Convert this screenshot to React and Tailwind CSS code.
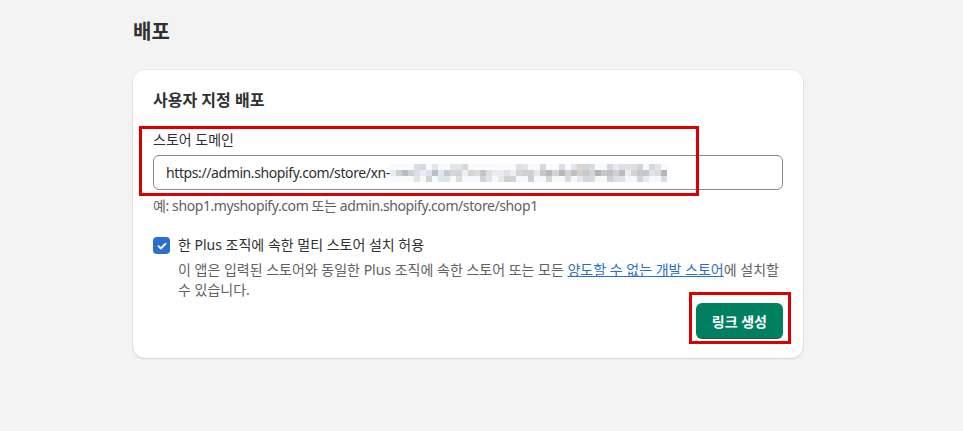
import React from "react";

const FONT = { fontFamily: '"Noto Sans", "Noto Sans CJK KR", sans-serif' };

function Mosaic() {
  const cols = 46;
  const rows = 3;
  const cells = [];
  let seed = 7;
  const rnd = () => {
    seed = (seed * 9301 + 49297) % 233280;
    return seed / 233280;
  };
  for (let r = 0; r < rows; r++) {
    for (let c = 0; c < cols; c++) {
      const v = rnd();
      let base;
      if (r === 0) base = v < 0.55 ? 250 : 232 - Math.floor(rnd() * 25);
      else if (r === 1) base = 238 - Math.floor(v * 60);
      else base = v < 0.4 ? 248 : 236 - Math.floor(rnd() * 30);
      const tint = Math.floor(rnd() * 10) - 5;
      cells.push(
        <div
          key={r + "-" + c}
          style={{
            backgroundColor: `rgb(${Math.min(255, base + tint)},${base},${Math.min(255, Math.max(0, base - tint + 4))})`,
          }}
        />
      );
    }
  }
  return (
    <div
      className="grid h-[18px] w-[277px]"
      style={{ gridTemplateColumns: `repeat(${cols}, 1fr)`, gridTemplateRows: `repeat(${rows}, 1fr)` }}
    >
      {cells}
    </div>
  );
}

export default function App() {
  return (
    <div className="min-h-screen w-full bg-[#f3f3f3]" style={FONT}>
      <div className="ml-[133px] w-[670px] pt-[17px]">
        <h1 className="text-[20px] leading-[30px] font-bold text-[#303030]">배포</h1>
        <div className="relative mt-[23px] rounded-xl bg-white px-5 pt-[20px] pb-[19px] shadow-[0_1px_2px_rgba(0,0,0,0.12),0_0_0_1px_rgba(0,0,0,0.03)]">
          <h2 className="text-[16px] leading-5 font-bold text-[#303030]">사용자 지정 배포</h2>

          <div className="mt-5 text-[14px] leading-5 text-[#303030]">스토어 도메인</div>
          <div className="mt-[5px] flex h-[35px] items-center rounded-md border border-[#8a8a8a] px-3 text-[14px] text-[#303030]">
            <span className="tracking-[-0.4px]">https://admin.shopify.com/store/xn-</span>
            <Mosaic />
          </div>
          <div className="mt-[6px] text-[14px] leading-5 tracking-[-0.4px] text-[#616161]">
            예: shop1.myshopify.com 또는 admin.shopify.com/store/shop1
          </div>

          <div className="mt-[19px] flex gap-2">
            <div className="mt-[2px] flex h-[17px] w-[17px] shrink-0 items-center justify-center rounded-[4px] bg-[#2c6ecb]">
              <svg width="12" height="12" viewBox="0 0 12 12" fill="none">
                <path d="M2.5 6.2l2.3 2.3L9.6 3.6" stroke="white" strokeWidth="1.8" strokeLinecap="round" strokeLinejoin="round" />
              </svg>
            </div>
            <div className="text-[14px] leading-5">
              <p className="text-[#303030]">한 Plus 조직에 속한 멀티 스토어 설치 허용</p>
              <p className="mt-[5px] text-[#616161]">
                이 앱은 입력된 스토어와 동일한 Plus 조직에 속한 스토어 또는 모든{" "}
                <a className="text-[#2c6ecb] underline">양도할 수 없는 개발 스토어</a>에 설치할 수 있습니다.
              </p>
            </div>
          </div>

          <div className="mt-[3px] flex justify-end">
            <button className="h-[36px] rounded-md bg-[#008060] px-[16px] text-[14px] font-bold text-white shadow-[inset_0_-1px_0_rgba(0,0,0,0.2)]">
              링크 생성
            </button>
          </div>

          <div className="pointer-events-none absolute left-[6px] top-[56px] h-[70px] w-[560px] border-[3px] border-[#dd0000]" />
          <div className="pointer-events-none absolute left-[556px] top-[222px] h-[52px] w-[102px] border-[3px] border-[#dd0000]" />
        </div>
      </div>
    </div>
  );
}
